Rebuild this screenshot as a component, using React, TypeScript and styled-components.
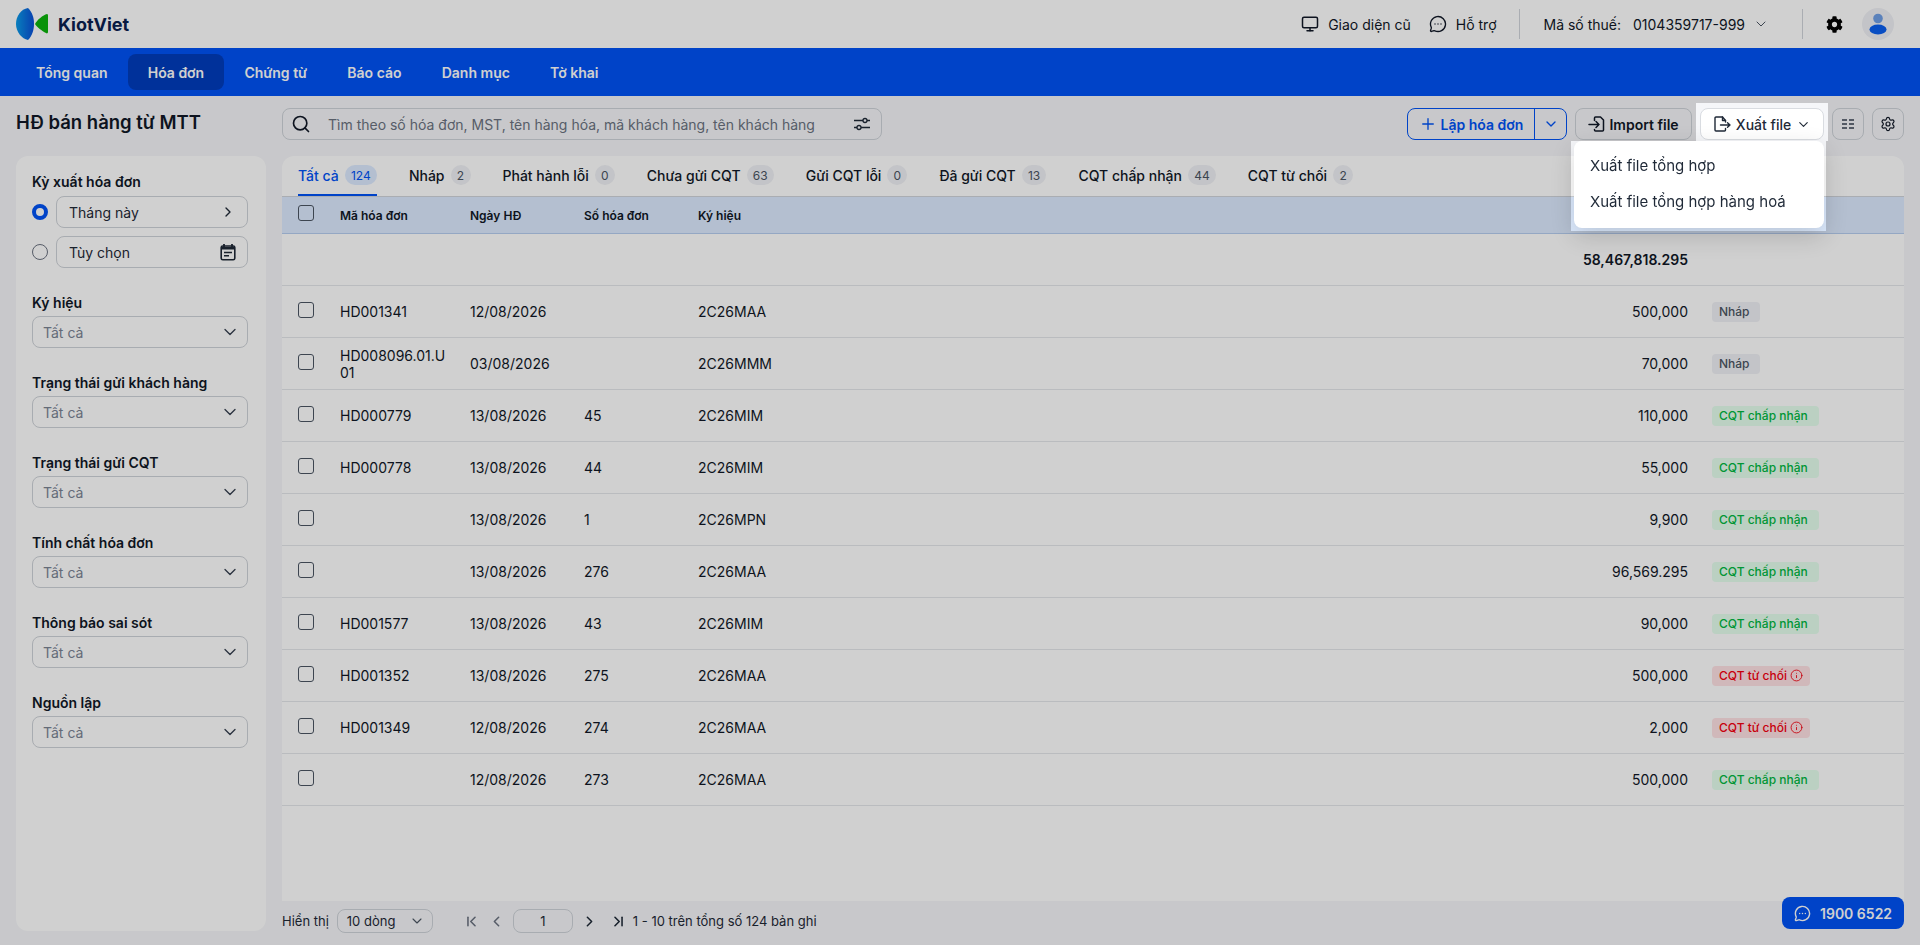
import styled, { createGlobalStyle } from "styled-components";
import {
  ChevronDown,
  ChevronFirst,
  ChevronLast,
  ChevronLeft,
  ChevronRight,
  Info,
  MessageCircleMore,
  Monitor,
  Plus,
  Search,
  Settings,
} from "lucide-react";
import { FaCog } from "react-icons/fa";

type Tone = "draft" | "ok" | "bad";

const navItems = ["Tổng quan", "Hóa đơn", "Chứng từ", "Báo cáo", "Danh mục", "Tờ khai"];

const tabs = [
  { label: "Tất cả", count: "124" },
  { label: "Nháp", count: "2" },
  { label: "Phát hành lỗi", count: "0" },
  { label: "Chưa gửi CQT", count: "63" },
  { label: "Gửi CQT lỗi", count: "0" },
  { label: "Đã gửi CQT", count: "13" },
  { label: "CQT chấp nhận", count: "44" },
  { label: "CQT từ chối", count: "2" },
];

const filters = ["Ký hiệu", "Trạng thái gửi khách hàng", "Trạng thái gửi CQT", "Tính chất hóa đơn", "Thông báo sai sót", "Nguồn lập"];

const rows: { code: string; date: string; no: string; sign: string; amount: string; status: string; tone: Tone }[] = [
  { code: "HD001341", date: "12/08/2026", no: "", sign: "2C26MAA", amount: "500,000", status: "Nháp", tone: "draft" },
  { code: "HD008096.01.U01", date: "03/08/2026", no: "", sign: "2C26MMM", amount: "70,000", status: "Nháp", tone: "draft" },
  { code: "HD000779", date: "13/08/2026", no: "45", sign: "2C26MIM", amount: "110,000", status: "CQT chấp nhận", tone: "ok" },
  { code: "HD000778", date: "13/08/2026", no: "44", sign: "2C26MIM", amount: "55,000", status: "CQT chấp nhận", tone: "ok" },
  { code: "", date: "13/08/2026", no: "1", sign: "2C26MPN", amount: "9,900", status: "CQT chấp nhận", tone: "ok" },
  { code: "", date: "13/08/2026", no: "276", sign: "2C26MAA", amount: "96,569.295", status: "CQT chấp nhận", tone: "ok" },
  { code: "HD001577", date: "13/08/2026", no: "43", sign: "2C26MIM", amount: "90,000", status: "CQT chấp nhận", tone: "ok" },
  { code: "HD001352", date: "13/08/2026", no: "275", sign: "2C26MAA", amount: "500,000", status: "CQT từ chối", tone: "bad" },
  { code: "HD001349", date: "12/08/2026", no: "274", sign: "2C26MAA", amount: "2,000", status: "CQT từ chối", tone: "bad" },
  { code: "", date: "12/08/2026", no: "273", sign: "2C26MAA", amount: "500,000", status: "CQT chấp nhận", tone: "ok" },
];

function Logo() {
  return (
    <svg width="33" height="32" viewBox="16 8 33 32">
      <defs>
        <linearGradient id="kv" x1="0" x2="1" y1="0" y2="0">
          <stop offset="0" stopColor="#0a9be8" />
          <stop offset="1" stopColor="#0a4fd8" />
        </linearGradient>
      </defs>
      <path d="M28 8C21 9 16 16 16 24c0 8 6 15 12 16 4-4 6-10 6-16 0-7-2-12-6-16Z" fill="url(#kv)" />
      <path d="M47 14c1 0 1 1 1 2 0 5 0 11 0 16 0 1-1 2-2 1-4-2-9-6-11-9 2-4 8-9 12-10Z" fill="#0cb30c" />
    </svg>
  );
}

function Avatar() {
  return (
    <svg width="32" height="32" viewBox="0 0 32 32">
      <circle cx="16" cy="16" r="16" fill="#f0f1f5" />
      <circle cx="16" cy="10.5" r="4.8" fill="#6f9fe6" />
      <ellipse cx="16" cy="21.5" rx="8.5" ry="5" fill="#0a5ff0" />
    </svg>
  );
}

function TuneIcon() {
  return (
    <svg width="18" height="18" viewBox="0 0 18 18" fill="none" stroke="#1f2937" strokeWidth="1.3">
      <path d="M1 5.5h9M14 5.5h3M1 12.5h3M8 12.5h9" />
      <circle cx="12" cy="5.5" r="2" />
      <circle cx="6" cy="12.5" r="2" />
    </svg>
  );
}

function ColumnsIcon() {
  return (
    <svg width="14" height="14" viewBox="0 0 14 14" fill="none" stroke="#374151" strokeWidth="1.3">
      <path d="M1 3h5M8 3h5M1 7h5M8 7h5M1 11h5M8 11h5" />
    </svg>
  );
}

function NoteCalendar() {
  return (
    <svg width="16" height="18" viewBox="0 0 16 18" fill="none" stroke="#1f2937">
      <path d="M4 1v3M12 1v3" strokeWidth="1.8" />
      <rect x="1.2" y="3" width="13.6" height="13.8" rx="1.6" strokeWidth="1.6" />
      <path d="M1.2 5.2h13.6" strokeWidth="2.6" />
      <path d="M4 9.5h8M4 12.7h5" strokeWidth="1.4" />
    </svg>
  );
}

function ImportIcon() {
  return (
    <svg width="18" height="18" viewBox="0 0 18 18" fill="none" stroke="currentColor" strokeWidth="1.5" strokeLinecap="round" strokeLinejoin="round">
      <path d="M6.5 5.5V3a1 1 0 0 1 1-1h5l3 3v10a1 1 0 0 1-1 1H7.5a1 1 0 0 1-1-1v-.5" />
      <path d="M1 9.5h10M8 6.5l3 3-3 3" />
    </svg>
  );
}

function ExportIcon() {
  return (
    <svg width="18" height="18" viewBox="0 0 18 18" fill="none" stroke="currentColor" strokeWidth="1.4" strokeLinecap="round" strokeLinejoin="round">
      <path d="M12.5 7V5.5L9.5 2H3a1 1 0 0 0-1 1v12a1 1 0 0 0 1 1h8.5a1 1 0 0 0 1-1v-1.5" />
      <path d="M9.5 2v3.5h3" />
      <path d="M7.5 10h9.5M14.5 7.7l2.5 2.3-2.5 2.3" />
    </svg>
  );
}

export default function App() {
  return (
    <Page>
      <GlobalStyle />
      <TopBar>
        <Brand>
          <Logo />
          <BrandName>KiotViet</BrandName>
        </Brand>
        <TopActions>
          <TopLink>
            <Monitor size={18} strokeWidth={2} />
            Giao diện cũ
          </TopLink>
          <TopLink>
            <MessageCircleMore size={18} strokeWidth={1.8} />
            Hỗ trợ
          </TopLink>
          <TopDivider />
          <TaxBox>
            <span>Mã số thuế:</span>
            <TaxNumber>0104359717-999</TaxNumber>
            <ChevronDown size={16} strokeWidth={1.5} color="#4b5563" />
          </TaxBox>
          <TopDivider />
          <GearSlot>
            <FaCog size={17} color="#000" />
          </GearSlot>
          <Avatar />
        </TopActions>
      </TopBar>

      <Nav>
        {navItems.map((item) => (
          <NavItem key={item} $active={item === "Hóa đơn"}>
            {item}
          </NavItem>
        ))}
      </Nav>

      <Workspace>
        <Title>HĐ bán hàng từ MTT</Title>
        <Toolbar>
          <SearchBox>
            <Search size={20} strokeWidth={2} color="#111827" />
            <SearchText>Tìm theo số hóa đơn, MST, tên hàng hóa, mã khách hàng, tên khách hàng</SearchText>
            <TuneIcon />
          </SearchBox>
          <Actions>
            <SplitButton>
              <SplitMain>
                <Plus size={18} strokeWidth={1.8} />
                Lập hóa đơn
              </SplitMain>
              <SplitCaret>
                <ChevronDown size={16} strokeWidth={2} />
              </SplitCaret>
            </SplitButton>
            <ToolButton $width={117}>
              <ImportIcon />
              Import file
            </ToolButton>
            <ExportSlot>
              <ExportButton>
                <ExportIcon />
                Xuất file
                <ChevronDown size={15} strokeWidth={1.8} />
              </ExportButton>
              <ExportMenu>
                <MenuItem>Xuất file tổng hợp</MenuItem>
                <MenuItem>Xuất file tổng hợp hàng hoá</MenuItem>
              </ExportMenu>
            </ExportSlot>
            <ToolButton $width={32}>
              <ColumnsIcon />
            </ToolButton>
            <ToolButton $width={32}>
              <Settings size={16} strokeWidth={1.8} />
            </ToolButton>
          </Actions>
        </Toolbar>

        <Sidebar>
          <FilterLabel>Kỳ xuất hóa đơn</FilterLabel>
          <RadioRow>
            <Radio $on />
            <FieldBox $dark>
              Tháng này
              <ChevronRight size={16} strokeWidth={2} color="#1f2937" />
            </FieldBox>
          </RadioRow>
          <RadioRow>
            <Radio />
            <FieldBox $dark>
              Tùy chọn
              <NoteCalendar />
            </FieldBox>
          </RadioRow>
          {filters.map((filter) => (
            <FilterGroup key={filter}>
              <FilterLabel>{filter}</FilterLabel>
              <FieldBox>
                Tất cả
                <ChevronDown size={20} strokeWidth={1.6} color="#374151" />
              </FieldBox>
            </FilterGroup>
          ))}
        </Sidebar>

        <Content>
          <TableCard>
            <Tabs>
              {tabs.map((tab, index) => (
                <Tab key={tab.label} $active={index === 0}>
                  {tab.label}
                  <Count $active={index === 0}>{tab.count}</Count>
                </Tab>
              ))}
            </Tabs>
            <Table>
              <colgroup>
                <col width="50" />
                <col width="130" />
                <col width="114" />
                <col width="114" />
                <col />
                <col width="200" />
                <col width="208" />
              </colgroup>
              <thead>
                <tr>
                  <HeadCell>
                    <CheckBox />
                  </HeadCell>
                  <HeadCell>Mã hóa đơn</HeadCell>
                  <HeadCell>Ngày HĐ</HeadCell>
                  <HeadCell>Số hóa đơn</HeadCell>
                  <HeadCell>Ký hiệu</HeadCell>
                  <HeadCell />
                  <HeadCell />
                </tr>
              </thead>
              <tbody>
                <tr>
                  <Cell colSpan={5} />
                  <AmountCell $bold>58,467,818.295</AmountCell>
                  <Cell />
                </tr>
                {rows.map((row, index) => (
                  <tr key={index}>
                    <Cell>
                      <CheckBox />
                    </Cell>
                    <CodeCell>{row.code}</CodeCell>
                    <Cell>{row.date}</Cell>
                    <Cell>{row.no}</Cell>
                    <Cell>{row.sign}</Cell>
                    <AmountCell>{row.amount}</AmountCell>
                    <StatusCell>
                      <Badge $tone={row.tone}>
                        {row.status}
                        {row.tone === "bad" && <Info size={13} strokeWidth={1.6} />}
                      </Badge>
                    </StatusCell>
                  </tr>
                ))}
              </tbody>
            </Table>
          </TableCard>

          <Pager>
            <PagerText>Hiển thị</PagerText>
            <PageSize>
              10 dòng
              <ChevronDown size={16} strokeWidth={1.6} color="#4b5563" />
            </PageSize>
            <PagerArrows>
              <ChevronFirst size={17} strokeWidth={2.2} color="#6b7280" />
              <ChevronLeft size={17} strokeWidth={2.2} color="#6b7280" />
              <PageInput>1</PageInput>
              <ChevronRight size={17} strokeWidth={2.2} color="#1f2937" />
              <ChevronLast size={17} strokeWidth={2.2} color="#1f2937" />
            </PagerArrows>
            <PagerText>1 - 10 trên tổng số 124 bản ghi</PagerText>
          </Pager>
        </Content>
      </Workspace>

      <Hotline>
        <MessageCircleMore size={17} strokeWidth={2} />
        1900 6522
      </Hotline>
      <Dimmer />
    </Page>
  );
}

const GlobalStyle = createGlobalStyle`
  html, body {
    margin: 0;
    padding: 0;
    height: 100%;
    overflow: hidden;
  }

  body {
    font-family: Inter, "Noto Sans", sans-serif;
    font-size: 14px;
    color: #111827;
  }

  * {
    box-sizing: border-box;
  }
`;

const Page = styled.div`
  display: flex;
  flex-direction: column;
  height: 945px;
  background: #f5f6f9;
`;

const TopBar = styled.header`
  display: flex;
  align-items: center;
  justify-content: space-between;
  height: 48px;
  padding: 0 26px 0 16px;
  background: #fff;
`;

const Brand = styled.div`
  display: flex;
  align-items: center;
  gap: 9px;
`;

const BrandName = styled.span`
  color: #0b2150;
  font-size: 18px;
  font-weight: 700;
`;

const TopActions = styled.div`
  display: flex;
  align-items: center;
`;

const TopLink = styled.div`
  display: flex;
  align-items: center;
  gap: 9px;
  margin-right: 13px;
  color: #111827;

  &:first-child {
    margin-right: 18px;
  }
`;

const TopDivider = styled.div`
  width: 1px;
  height: 30px;
  margin: 0 23px 0 9px;
  background: #d1d5db;
`;

const TaxBox = styled.div`
  display: flex;
  align-items: center;
  margin-right: 24px;
  padding-left: 1px;
`;

const TaxNumber = styled.span`
  margin: 0 8px 0 12px;
`;

const GearSlot = styled.div`
  display: flex;
  margin-right: 19px;
`;

const Nav = styled.nav`
  display: flex;
  align-items: center;
  height: 48px;
  padding: 0 16px;
  background: #0053f5;
`;

const NavItem = styled.div<{ $active?: boolean }>`
  display: flex;
  align-items: center;
  height: 36px;
  padding: 0 20.1px;
  border-radius: 8px;
  background: ${(p) => (p.$active ? "#003dbd" : "transparent")};
  color: #fff;
  font-weight: 600;
`;

const Workspace = styled.main`
  display: grid;
  flex: 1;
  min-height: 0;
  grid-template-columns: 250px minmax(0, 1fr);
  grid-template-rows: 32px minmax(0, 1fr);
  column-gap: 16px;
  row-gap: 16px;
  padding: 12px 16px 4px;
`;

const Title = styled.h1`
  margin: 0;
  color: #111827;
  font-size: 18.5px;
  font-weight: 600;
  line-height: 28px;
`;

const Toolbar = styled.div`
  display: flex;
  align-items: center;
  justify-content: space-between;
`;

const SearchBox = styled.div`
  display: flex;
  align-items: center;
  width: 600px;
  height: 32px;
  padding: 0 10px 0 8px;
  border: 1px solid #cfd3d9;
  border-radius: 8px;
`;

const SearchText = styled.span`
  flex: 1;
  margin-left: 17px;
  color: #6b7280;
`;

const Actions = styled.div`
  display: flex;
  align-items: center;
  gap: 8px;
`;

const SplitButton = styled.div`
  display: flex;
  width: 160px;
  height: 32px;
  border: 1px solid #0053f5;
  border-radius: 8px;
  color: #0053f5;
  font-weight: 600;
`;

const SplitMain = styled.div`
  display: flex;
  flex: 1;
  align-items: center;
  justify-content: center;
  gap: 4px;
  border-right: 1px solid #0053f5;
`;

const SplitCaret = styled.div`
  display: flex;
  align-items: center;
  justify-content: center;
  width: 31px;
`;

const ToolButton = styled.div<{ $width: number }>`
  display: flex;
  align-items: center;
  justify-content: center;
  gap: 3px;
  width: ${(p) => p.$width}px;
  height: 32px;
  border: 1px solid #cfd3d9;
  border-radius: 8px;
  color: #111827;
  font-weight: 600;
`;

const ExportSlot = styled.div`
  position: relative;
`;

const ExportButton = styled.div`
  display: flex;
  align-items: center;
  justify-content: center;
  gap: 5px;
  width: 124px;
  height: 32px;
  border: 1px solid #d9dce1;
  border-radius: 8px;
  background: #fff;
  color: #1f2937;
  font-weight: 500;
`;

const ExportMenu = styled.div`
  position: absolute;
  z-index: 20;
  top: 33px;
  right: 0;
  width: 250px;
  height: 87px;
  padding: 6px 0;
  border-radius: 8px;
  background: #fff;
  box-shadow: 0 8px 24px rgba(0, 0, 0, 0.16);
`;

const MenuItem = styled.div`
  display: flex;
  align-items: center;
  height: 36px;
  padding: 0 16px;
  color: #1f2937;
  font-size: 15px;
`;

const Sidebar = styled.aside`
  margin-bottom: 10px;
  padding: 17px 18px 17px 16px;
  border-radius: 12px;
  background: #fff;
`;

const FilterLabel = styled.div`
  height: 17px;
  color: #111827;
  font-weight: 600;
  line-height: 17px;
`;

const RadioRow = styled.div`
  display: flex;
  align-items: center;
  gap: 8px;
  margin-top: 6px;
  & + & {
    margin-top: 8px;
  }
`;

const Radio = styled.span<{ $on?: boolean }>`
  flex: none;
  width: 16px;
  height: 16px;
  border-radius: 50%;
  border: ${(p) => (p.$on ? "4.5px solid #0053f5" : "1.5px solid #6b7280")};
  background: ${(p) => (p.$on ? "#fff" : "transparent")};
`;

const FieldBox = styled.div<{ $dark?: boolean }>`
  display: flex;
  flex: 1;
  align-items: center;
  justify-content: space-between;
  height: 32px;
  padding: 0 ${(p) => (p.$dark ? "11px 0 12px" : "7px 0 10px")};
  border: 1px solid #cfd3d9;
  border-radius: 8px;
  color: ${(p) => (p.$dark ? "#1f2937" : "#7b8494")};
`;

const FilterGroup = styled.div`
  display: grid;
  gap: 5px;
  margin-top: 26px;
`;

const Content = styled.section`
  display: flex;
  flex-direction: column;
  min-width: 0;
`;

const TableCard = styled.div`
  flex: 1;
  min-height: 0;
  border-radius: 12px 12px 0 0;
  background: #fff;
  overflow: hidden;
`;

const Tabs = styled.div`
  display: flex;
  gap: 32px;
  height: 41px;
  padding: 0 16px;
  border-bottom: 1px solid #d1d5db;
`;

const Tab = styled.div<{ $active?: boolean }>`
  display: flex;
  align-items: center;
  gap: 6px;
  height: 40px;
  border-bottom: 2px solid ${(p) => (p.$active ? "#0053f5" : "transparent")};
  color: ${(p) => (p.$active ? "#0053f5" : "#111827")};
  font-weight: 500;
`;

const Count = styled.span<{ $active?: boolean }>`
  display: flex;
  align-items: center;
  justify-content: center;
  min-width: 20px;
  height: 20px;
  padding: 0 6.2px;
  border-radius: 10px;
  background: ${(p) => (p.$active ? "#ddebff" : "#f0f1f5")};
  color: ${(p) => (p.$active ? "#0053f5" : "#4b5563")};
  font-size: 12px;
  font-weight: 400;
`;

const Table = styled.table`
  width: 100%;
  table-layout: fixed;
  border-collapse: separate;
  border-spacing: 0;
`;

const HeadCell = styled.th`
  height: 37px;
  padding: 0 8px;
  border-bottom: 1px solid #b6cdf0;
  background: #ddebff;
  color: #111827;
  font-size: 12px;
  font-weight: 600;
  text-align: left;
`;

const Cell = styled.td`
  height: 52px;
  padding: 0 8px;
  border-bottom: 1px solid #e5e7eb;
  color: #111827;
`;

const CodeCell = styled(Cell)`
  word-break: break-all;
`;

const AmountCell = styled(Cell)<{ $bold?: boolean }>`
  font-weight: ${(p) => (p.$bold ? 600 : 400)};
  text-align: right;
`;

const StatusCell = styled(Cell)`
  padding-left: 16px;
`;

const CheckBox = styled.span`
  display: block;
  width: 16px;
  height: 16px;
  margin: -4px 0 0 8px;
  border: 1px solid #4b5563;
  border-radius: 3px;
`;

const badgeColors: Record<Tone, { bg: string; fg: string; width: number }> = {
  draft: { bg: "#f0f1f5", fg: "#4b5563", width: 48 },
  ok: { bg: "#e6ffee", fg: "#00b841", width: 107 },
  bad: { bg: "#ffe2e4", fg: "#f5000f", width: 98 },
};

const Badge = styled.span<{ $tone: Tone }>`
  display: inline-flex;
  align-items: center;
  gap: 3px;
  width: ${(p) => badgeColors[p.$tone].width}px;
  height: 20px;
  padding: 0 7px;
  border-radius: 4px;
  background: ${(p) => badgeColors[p.$tone].bg};
  color: ${(p) => badgeColors[p.$tone].fg};
  font-size: 12px;
  font-weight: 500;
  white-space: nowrap;
`;

const Pager = styled.footer`
  display: flex;
  flex: none;
  align-items: center;
  height: 40px;
`;

const PagerText = styled.span`
  color: #1f2937;
  font-size: 13px;
`;

const PageSize = styled.div`
  display: flex;
  align-items: center;
  justify-content: space-between;
  width: 96px;
  height: 24px;
  margin-left: 8px;
  padding: 0 7px 0 9px;
  border: 1px solid #cfd3d9;
  border-radius: 8px;
  color: #1f2937;
  font-size: 13px;
`;

const PagerArrows = styled.div`
  display: flex;
  align-items: center;
  gap: 8px;
  margin: 0 6px 0 30px;

  & > svg:last-child {
    margin-left: 4px;
  }
`;

const PageInput = styled.div`
  display: flex;
  align-items: center;
  justify-content: center;
  width: 60px;
  height: 24px;
  border: 1px solid #cfd3d9;
  border-radius: 8px;
  color: #1f2937;
  font-size: 13px;
`;

const Hotline = styled.div`
  position: fixed;
  right: 16px;
  bottom: 16px;
  display: flex;
  align-items: center;
  gap: 9px;
  width: 122px;
  height: 32px;
  padding-left: 12px;
  border-radius: 8px;
  background: #0053f5;
  color: #fff;
  font-size: 14px;
  font-weight: 600;
`;

const Dimmer = styled.div`
  position: fixed;
  inset: 0;
  z-index: 10;
  background: rgba(0, 0, 0, 0.184);
  clip-path: path(evenodd, "M0 0H1920V945H0Z M1696 103H1828V141H1826V231H1571V141H1696Z");
`;
